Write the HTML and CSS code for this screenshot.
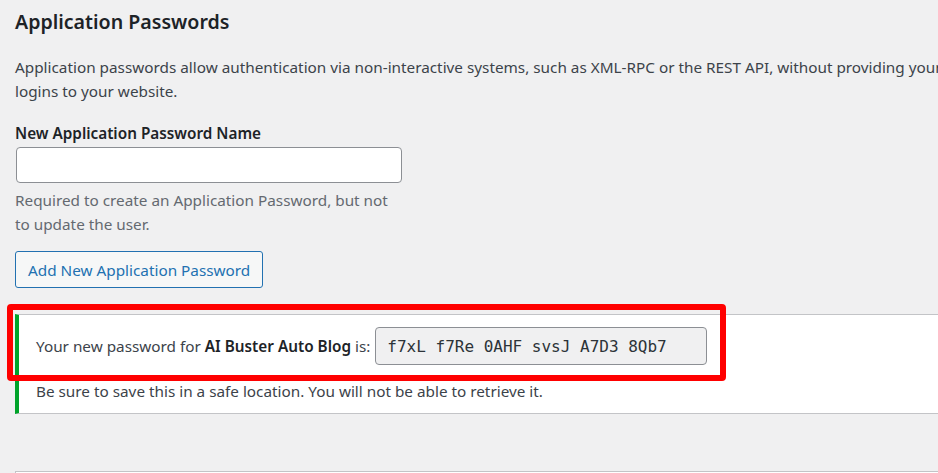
FILE: index.html
```html
<!DOCTYPE html>
<html lang="en">
<head>
<meta charset="utf-8">
<title>Application Passwords</title>
<link rel="stylesheet" href="styles.css">
</head>
<body>
<div class="wrap">
  <h2 class="title">Application Passwords</h2>
  <p class="intro">Application passwords allow authentication via non-interactive systems, such as XML-RPC or the REST API, without providing your actual password. Application passwords can be easily revoked. They cannot be used for traditional<br>logins to your website.</p>
  <div class="create">
    <label class="label" for="app-name">New Application Password Name</label>
    <input class="text-input" id="app-name" type="text">
    <p class="description">Required to create an Application Password, but not<br>to update the user.</p>
    <button class="button" type="button">Add New Application Password</button>
  </div>
  <div class="notice">
    <p class="notice-line"><span>Your new password for <strong>AI Buster Auto Blog</strong> is:</span><input class="pw-input" type="text" readonly value="f7xL f7Re 0AHF svsJ A7D3 8Qb7"></p>
    <p class="notice-sub">Be sure to save this in a safe location. You will not be able to retrieve it.</p>
  </div>
  <div class="next-box"></div>
  <div class="highlight"></div>
</div>
</body>
</html>
```
FILE: styles.css
```css
html, body {
  margin: 0;
  padding: 0;
  background: #f0f0f1;
  overflow: hidden;
}
body {
  width: 938px;
  height: 473px;
  font-family: "Noto Sans", "Open Sans", sans-serif;
  color: #3c434a;
  font-size: 15.3px;
}
.wrap {
  position: relative;
  width: 1400px;
  padding: 0 0 0 15px;
}
.title {
  margin: 0;
  padding-top: 6px;
  font-size: 19.6px;
  font-weight: 600;
  line-height: 32px;
  color: #1d2327;
}
.intro {
  margin: 17px 0 0;
  line-height: 24px;
  white-space: nowrap;
}
.create {
  display: flex;
  flex-direction: column;
  align-items: flex-start;
  margin-top: 18px;
}
.label {
  font-weight: 600;
  color: #1d2327;
  line-height: 24px;
}
.text-input {
  box-sizing: border-box;
  width: 386px;
  height: 36px;
  margin: 2px 0 0 1px;
  border: 1px solid #8c8f94;
  border-radius: 4px;
  background: #fff;
}
.description {
  margin: 5px 0 0;
  line-height: 24px;
  color: #646970;
}
.button {
  box-sizing: border-box;
  margin-top: 15px;
  height: 37px;
  padding: 0 12px;
  font: inherit;
  color: #2271b1;
  background: #f6f7f7;
  border: 1px solid #2271b1;
  border-radius: 3px;
}
.notice {
  margin-top: 26px;
  background: #fff;
  border: 1px solid #c3c4c7;
  border-left: 4px solid #00a32a;
  padding: 12px 0 10px 17px;
}
.notice-line {
  margin: 0;
  display: flex;
  align-items: center;
  gap: 5px;
}
.notice-line strong {
  color: #1d2327;
  font-weight: 600;
}
.pw-input {
  box-sizing: border-box;
  width: 332px;
  height: 38px;
  margin: 0;
  padding: 0 11px;
  font-family: "DejaVu Sans Mono", "Liberation Mono", monospace;
  font-size: 16px;
  color: #2c3338;
  background: #f0f0f1;
  border: 1px solid #8c8f94;
  border-radius: 4px;
}
.notice-sub {
  margin: 14px 0 0;
  line-height: 24px;
}
.next-box {
  margin-top: 57px;
  height: 20px;
  background: #fff;
  border: 1px solid #c3c4c7;
}
.highlight {
  position: absolute;
  left: 7px;
  top: 304px;
  width: 719px;
  height: 77px;
  box-sizing: border-box;
  border: 6px solid #ff0000;
  border-radius: 4px;
}
```
